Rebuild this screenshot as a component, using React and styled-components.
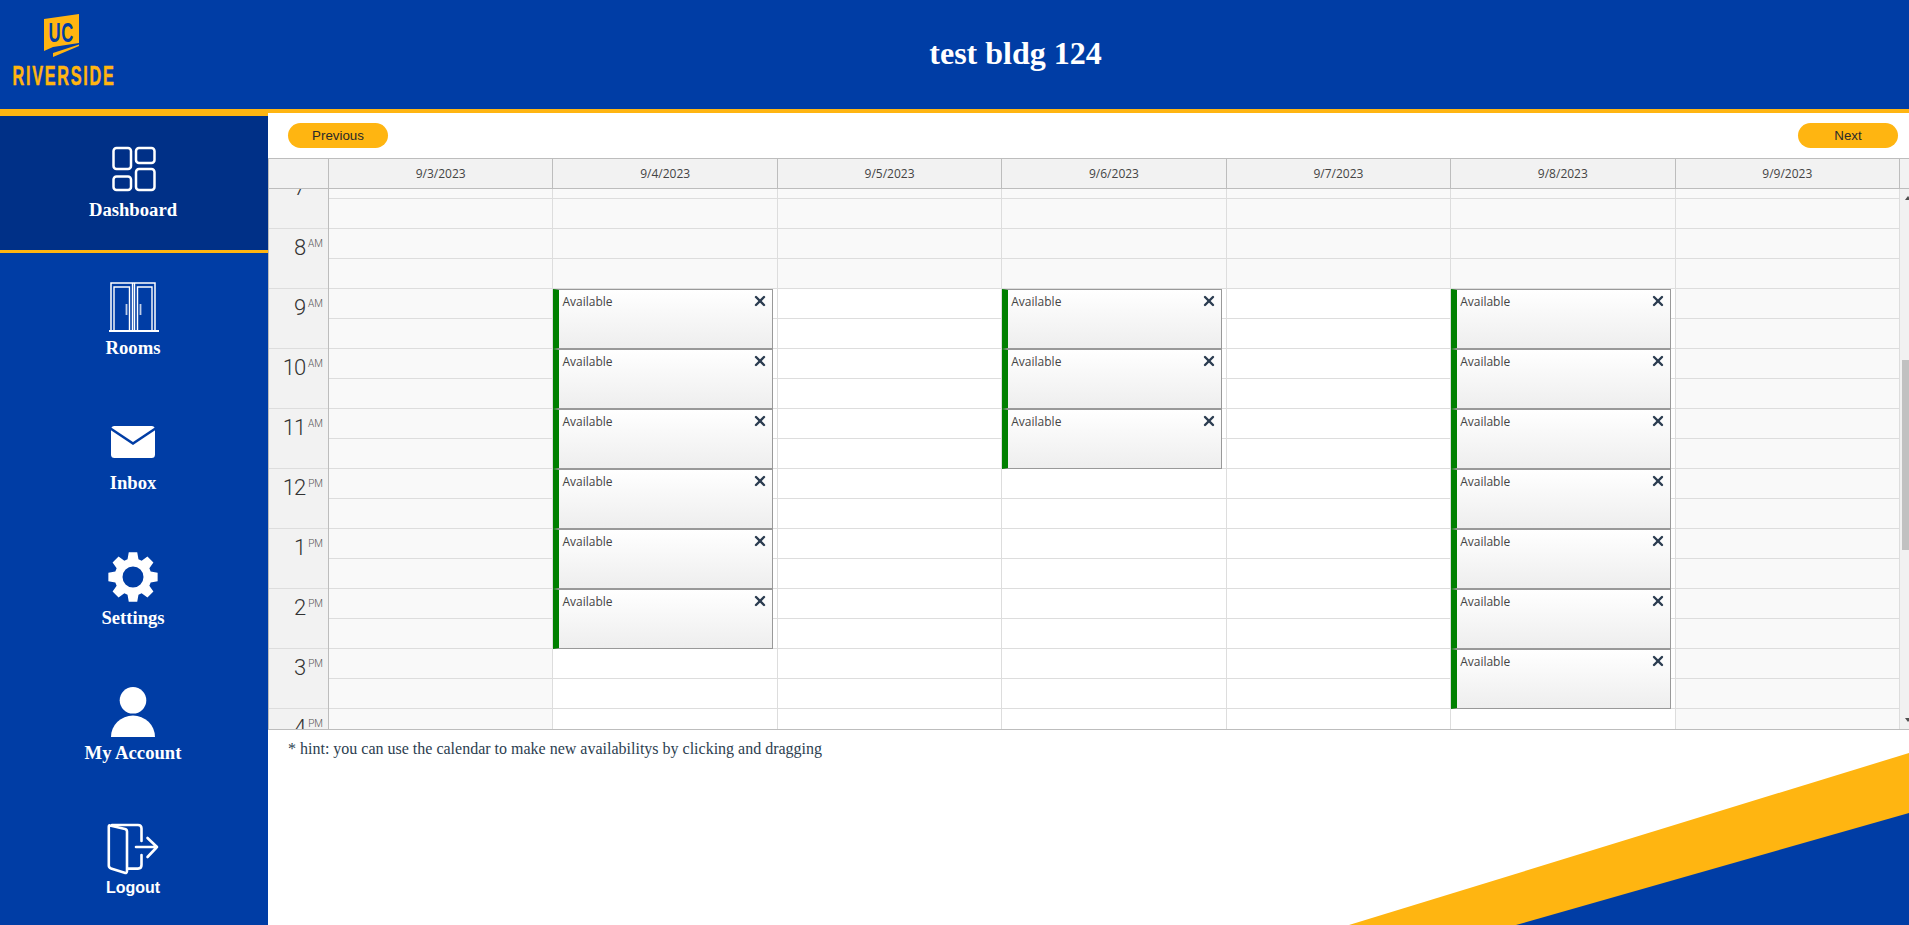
import React from "react";
import styled, { createGlobalStyle } from "styled-components";
import { X } from "lucide-react";

const BLUE = "#003da5";
const GOLD = "#ffb511";

const Global = createGlobalStyle`
  html, body { margin: 0; padding: 0; height: 100%; overflow: hidden; background: #fff; }
  * { box-sizing: border-box; }
`;

const Page = styled.div`
  display: flex;
  flex-direction: column;
  width: 100%;
  height: 100vh;
  overflow: hidden;
  font-family: "Liberation Serif", serif;
`;

const Header = styled.header`
  display: flex;
  align-items: center;
  flex: 0 0 113px;
  height: 113px;
  background: ${BLUE};
  border-bottom: 4px solid ${GOLD};
`;

const LogoBox = styled.div`
  flex: 0 0 122px;
  height: 109px;
`;

const Title = styled.h1`
  flex: 1;
  margin: 0 0 2px;
  text-align: center;
  color: #fff;
  font-size: 32px;
  font-weight: 700;
  line-height: 37px;
`;

const Body = styled.div`
  display: flex;
  flex: 1;
  min-height: 0;
`;

const Sidebar = styled.nav`
  flex: 0 0 268px;
  display: flex;
  flex-direction: column;
  background: ${BLUE};
  border-top: 3px solid ${GOLD};
  overflow: hidden;
`;

const NavItem = styled.a`
  display: flex;
  flex-direction: column;
  align-items: center;
  flex: 0 0 ${(p) => (p.$active ? "137px" : "135px")};
  padding-top: ${(p) => (p.$active ? "28px" : "29px")};
  gap: 6px;
  color: #fff;
  background: ${(p) => (p.$active ? "#003087" : "transparent")};
  border-bottom: ${(p) => (p.$active ? `3px solid ${GOLD}` : "none")};
`;

const NavIcon = styled.svg`
  display: block;
  width: 50px;
  height: 50px;
  overflow: visible;
`;

const NavLabel = styled.span`
  margin-right: 2px;
  font-family: ${(p) => (p.$sans ? '"Liberation Sans", sans-serif' : '"Liberation Serif", serif')};
  font-size: ${(p) => (p.$sans ? "16px" : "18.67px")};
  font-weight: 700;
  line-height: 20px;
  white-space: nowrap;
`;

const Main = styled.main`
  position: relative;
  flex: 1;
  min-width: 0;
  overflow: hidden;
  background: #fff;
`;

const Toolbar = styled.div`
  display: flex;
  justify-content: space-between;
  align-items: flex-start;
  height: 45px;
  padding: 10px 11px 0 20px;
`;

const PillButton = styled.button`
  width: 100px;
  height: 25px;
  padding: 0;
  border: none;
  border-radius: 13px;
  background: ${GOLD};
  color: #2a2a2a;
  font-family: "Liberation Sans", sans-serif;
  font-size: 13.33px;
  line-height: 25px;
`;

const DayHeadRow = styled.div`
  display: grid;
  grid-template-columns: 61px repeat(7, 1fr) 9px;
  height: 31px;
  background: #f2f2f2;
  border-top: 1px solid #bdbdbd;
  border-bottom: 1px solid #bdbdbd;
`;

const Corner = styled.div`
  border-left: 1px solid #bdbdbd;
  border-right: 1px solid #bdbdbd;
`;

const DayHead = styled.div`
  display: flex;
  align-items: center;
  justify-content: center;
  border-right: 1px solid #bdbdbd;
  color: #444;
  font-family: "Open Sans", sans-serif;
  font-size: 12px;
`;

const CalBody = styled.div`
  display: grid;
  grid-template-columns: 61px repeat(7, 1fr) 9px;
  grid-template-rows: 540px;
  height: 541px;
  overflow: hidden;
  border-bottom: 1px solid #bdbdbd;
`;

const TimeColumn = styled.div`
  margin-top: -21px;
  background: #f2f2f2;
  border-left: 1px solid #bdbdbd;
  border-right: 1px solid #bdbdbd;
`;

const TimeCell = styled.div`
  display: flex;
  justify-content: flex-end;
  align-items: flex-start;
  gap: 3px;
  height: 60px;
  padding: 4px 5px 0 0;
  border-top: 1px solid #ddd;
  color: #333;
  font-family: Roboto, sans-serif;
  font-weight: 300;
`;

const HourNum = styled.span`
  font-size: 22px;
  line-height: 30px;
  letter-spacing: -1px;
`;

const Meridiem = styled.span`
  margin-top: 5px;
  font-size: 10px;
  line-height: 12px;
  color: #555;
`;

const DayColumn = styled.div`
  margin-top: -21px;
`;

const HourCell = styled.div`
  position: relative;
  height: 60px;
  background: ${(p) => (p.$open ? "#fff" : "#f9f9f9")};
  border-right: 1px solid #ddd;
`;

const Slot = styled.div`
  height: 30px;
  border-top: 1px solid #ddd;
`;

const EventCard = styled.div`
  position: absolute;
  top: 1px;
  left: 0;
  right: 4px;
  height: 60px;
  z-index: 1;
  display: flex;
  justify-content: space-between;
  align-items: flex-start;
  padding: 4px 4px 0 3px;
  background: linear-gradient(#fff, #eee);
  border: 1px solid #999;
  border-left: 6px solid #008000;
  color: #444;
  font-family: "Open Sans", sans-serif;
  font-size: 12px;
  line-height: 16px;
`;

const CloseIcon = styled(X)`
  margin-top: -1px;
  color: #2b3c50;
`;

const ScrollTrack = styled.div`
  position: relative;
  background: #f1f1f1;
`;

const ScrollThumb = styled.div`
  position: absolute;
  top: 171px;
  left: 2px;
  width: 7px;
  height: 190px;
  background: #c1c1c1;
`;

const ScrollArrow = styled.div`
  position: absolute;
  left: 5px;
  top: ${(p) => (p.$down ? "529px" : "7px")};
  width: 0;
  height: 0;
  border-left: 3px solid transparent;
  border-right: 3px solid transparent;
  ${(p) => (p.$down ? "border-top: 4px solid #505050;" : "border-bottom: 4px solid #505050;")}
`;

const Hint = styled.p`
  margin: 0;
  padding: 9px 0 0 20px;
  color: #2c3e50;
  font-size: 16px;
  line-height: 20px;
`;

const Wedge = styled.div`
  position: absolute;
  right: 0;
  bottom: 0;
  width: ${(p) => p.$w}px;
  height: ${(p) => p.$h}px;
  background: ${(p) => p.$c};
  clip-path: polygon(100% 0, 100% 100%, 0 100%);
`;

const LogoSvg = styled.svg`
  display: block;
  width: 122px;
  height: 109px;
`;

const Logo = () => (
  <LogoSvg viewBox="0 0 122 109">
    <polygon points="44,19 79,14 79,43 53,47 44,51" fill={GOLD} />
    <polygon points="53,53 79,44.5 79,46 53,57" fill={GOLD} />
    <text transform="translate(48.5 42) scale(.62 1)" fontFamily="Liberation Sans, sans-serif" fontWeight="700" fontSize="27" letterSpacing="1" fill={BLUE}>UC</text>
    <text transform="translate(12.5 85) scale(.58 1)" fontFamily="Liberation Sans, sans-serif" fontWeight="700" fontSize="28" letterSpacing="3" stroke={GOLD} strokeWidth=".5" fill={GOLD}>RIVERSIDE</text>
  </LogoSvg>
);

const gearPath = () => {
  const cx = 25, cy = 25, n = 8, ro = 25, ri = 18.5;
  let d = "";
  for (let i = 0; i < n; i++) {
    const a = (i * 2 * Math.PI) / n - Math.PI / 2;
    const pts = [[-0.3, ri], [-0.17, ro], [0.17, ro], [0.3, ri]];
    pts.forEach(([o, r], k) => {
      const x = (cx + r * Math.cos(a + o)).toFixed(2);
      const y = (cy + r * Math.sin(a + o)).toFixed(2);
      d += `${i === 0 && k === 0 ? "M" : "L"}${x} ${y}`;
    });
  }
  d += "Z M25 14.5a10.5 10.5 0 1 0 0 21a10.5 10.5 0 1 0 0-21Z";
  return d;
};

const icons = {
  dashboard: (
    <g fill="none" stroke="#fff" strokeWidth="2.5">
      <rect x="4.5" y="4" width="17.5" height="21" rx="3" />
      <rect x="27" y="4" width="18.5" height="15" rx="3" />
      <rect x="4.5" y="32.5" width="17.5" height="13.5" rx="3" />
      <rect x="27" y="25" width="18.5" height="21" rx="3" />
    </g>
  ),
  rooms: (
    <g fill="none" stroke="#fff">
      <path d="M0 49h50" strokeWidth="1.8" />
      <path d="M2 49V1h44v48" strokeWidth="1.5" />
      <path d="M23.5 1v48M25.5 1v48" strokeWidth="1.4" />
      <path d="M5 49V5h15.5v44M28.5 49V5H43v44" strokeWidth="1.4" />
      <path d="M17.5 22v11M31.5 22v11" strokeWidth="1.8" opacity=".75" />
    </g>
  ),
  inbox: (
    <g>
      <rect x="2" y="9" width="44" height="32" rx="3.5" fill="#fff" />
      <path d="M0 10.5L24 26.5L48 10.5" fill="none" stroke={BLUE} strokeWidth="2.6" />
    </g>
  ),
  settings: <path d={gearPath()} fill="#fff" fillRule="evenodd" transform="translate(-1 0)" />,
  account: (
    <g fill="#fff">
      <circle cx="24" cy="13.3" r="13.3" />
      <path d="M2 50a22 21.5 0 0 1 44 0Z" />
    </g>
  ),
  logout: (
    <g fill="none" stroke="#fff" strokeWidth="2.6" strokeLinecap="round" strokeLinejoin="round">
      <path d="M1 3.5L16 7c1.5.4 2 1.2 2 2.5V49c0 1.6-.9 2.3-2.4 1.8L2 46.4C.6 46-.2 45-.2 43.6V5C-.2 3.8 0 3.2 1 3.5Z" />
      <path d="M3 3h26c2.5 0 3.5 1.2 3.5 3.5V19M32.5 33v10c0 2.5-1 3.6-3.5 3.6H19" />
      <path d="M27 25h21M38.5 16l9.5 9l-9.5 10" />
    </g>
  ),
};

const navItems = [
  { key: "dashboard", label: "Dashboard", active: true },
  { key: "rooms", label: "Rooms" },
  { key: "inbox", label: "Inbox" },
  { key: "settings", label: "Settings" },
  { key: "account", label: "My Account" },
  { key: "logout", label: "Logout", sans: true },
];

const days = [
  { date: "9/3/2023", open: false, events: [] },
  { date: "9/4/2023", open: true, events: [9, 10, 11, 12, 13, 14] },
  { date: "9/5/2023", open: true, events: [] },
  { date: "9/6/2023", open: true, events: [9, 10, 11] },
  { date: "9/7/2023", open: true, events: [] },
  { date: "9/8/2023", open: true, events: [9, 10, 11, 12, 13, 14, 15] },
  { date: "9/9/2023", open: false, events: [] },
];

const hours = [7, 8, 9, 10, 11, 12, 13, 14, 15, 16];

export default function App() {
  return (
    <>
      <Global />
      <Page>
        <Header>
          <LogoBox>
            <Logo />
          </LogoBox>
          <Title>test bldg 124</Title>
        </Header>
        <Body>
          <Sidebar>
            {navItems.map((n) => (
              <NavItem key={n.key} $active={n.active}>
                <NavIcon viewBox="0 0 50 50">{icons[n.key]}</NavIcon>
                <NavLabel $sans={n.sans}>{n.label}</NavLabel>
              </NavItem>
            ))}
          </Sidebar>
          <Main>
            <Wedge $w={560} $h={172} $c={GOLD} />
            <Wedge $w={393} $h={112} $c={BLUE} />
            <Toolbar>
              <PillButton>Previous</PillButton>
              <PillButton>Next</PillButton>
            </Toolbar>
            <DayHeadRow>
              <Corner />
              {days.map((d) => (
                <DayHead key={d.date}>{d.date}</DayHead>
              ))}
            </DayHeadRow>
            <CalBody>
              <TimeColumn>
                {hours.map((h) => (
                  <TimeCell key={h}>
                    <HourNum>{h > 12 ? h - 12 : h}</HourNum>
                    <Meridiem>{h >= 12 ? "PM" : "AM"}</Meridiem>
                  </TimeCell>
                ))}
              </TimeColumn>
              {days.map((d) => (
                <DayColumn key={d.date}>
                  {hours.map((h) => (
                    <HourCell key={h} $open={d.open && h >= 9}>
                      <Slot />
                      <Slot />
                      {d.events.includes(h) && (
                        <EventCard>
                          Available
                          <CloseIcon size={16} strokeWidth={3.6} />
                        </EventCard>
                      )}
                    </HourCell>
                  ))}
                </DayColumn>
              ))}
              <ScrollTrack>
                <ScrollArrow />
                <ScrollThumb />
                <ScrollArrow $down />
              </ScrollTrack>
            </CalBody>
            <Hint>* hint: you can use the calendar to make new availabilitys by clicking and dragging</Hint>
          </Main>
        </Body>
      </Page>
    </>
  );
}
